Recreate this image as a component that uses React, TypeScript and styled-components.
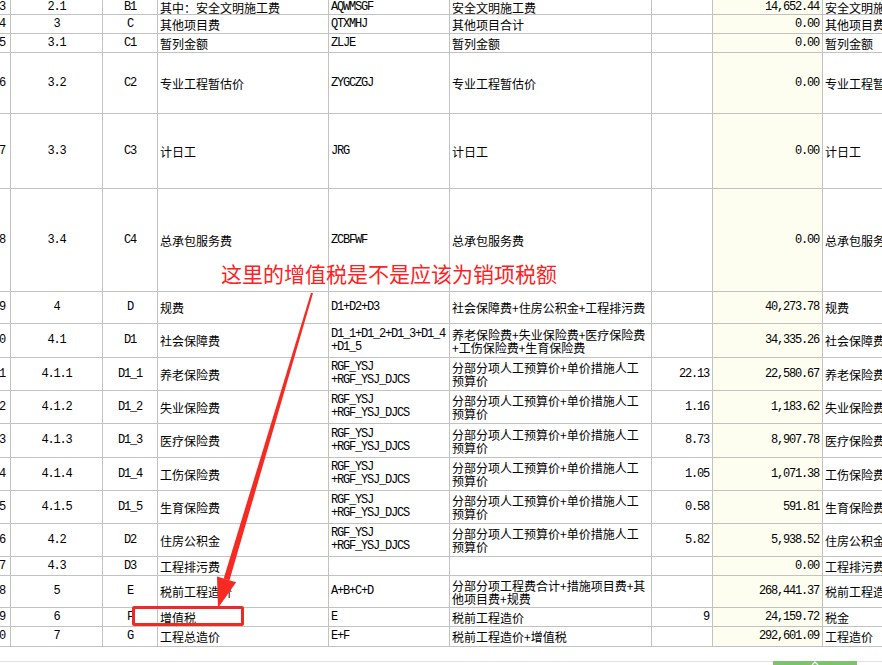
import React from "react";
import styled, { createGlobalStyle } from "styled-components";

const GlobalStyle = createGlobalStyle`
  html, body { margin: 0; padding: 0; background: #ffffff; overflow: hidden; }
  * { box-sizing: border-box; }
`;

const GRID = "#c2c2c2";
const MONO = `"Liberation Mono", "Noto Sans CJK SC", monospace`;
const CJK = `"Noto Sans CJK SC", "Liberation Sans", sans-serif`;

const Page = styled.div`
  position: relative;
  width: 882px;
  height: 665px;
  overflow: hidden;
  background: #ffffff;
`;

const Sheet = styled.div`
  display: flex;
  flex-direction: column;
  margin-left: -26px;
`;

const Row = styled.div<{ $h: number }>`
  display: grid;
  grid-template-columns: 37px 92px 55px 171px 121px 202px 61px 110px 120px;
  height: ${(p) => p.$h}px;
`;

type Align = "left" | "center" | "right";

const Cell = styled.div<{ $align: Align; $mono?: boolean; $fill?: boolean }>`
  display: flex;
  align-items: center;
  justify-content: ${(p) =>
    p.$align === "left" ? "flex-start" : p.$align === "right" ? "flex-end" : "center"};
  text-align: ${(p) => p.$align};
  border-right: 1px solid ${GRID};
  border-bottom: 1px solid ${GRID};
  background: ${(p) => (p.$fill ? "#fefef0" : "#ffffff")};
  padding: 0 ${(p) => (p.$align === "right" ? "3px" : "0")} 0
    ${(p) => (p.$align === "left" ? "2px" : "0")};
  font-family: ${(p) => (p.$mono ? MONO : CJK)};
  font-size: 12px;
  letter-spacing: ${(p) => (p.$mono ? "-1.2px" : "0")};
  line-height: 13px;
  color: #000000;
  white-space: pre-line;
  overflow: hidden;
`;

const NumCell = styled(Cell)`
  padding-right: 5px;
`;

const Spacer = styled.div`
  height: 14px;
`;

const BottomBar = styled.div`
  display: flex;
  height: 4px;
  padding-left: 773px;
  box-shadow: inset 0 1px 0 #e2e2e2;
`;

const Tab = styled.div`
  width: 84px;
  height: 4px;
  background: #7dc36b;
  display: flex;
  justify-content: center;
  align-items: flex-start;
`;

const Note = styled.div`
  position: absolute;
  left: 221px;
  top: 260px;
  font-family: ${CJK};
  font-size: 21px;
  line-height: 26px;
  color: #ff2121;
  white-space: nowrap;
`;

const Overlay = styled.svg`
  position: absolute;
  left: 0;
  top: 0;
  pointer-events: none;
`;

const Highlight = styled.div`
  position: absolute;
  left: 132px;
  top: 606px;
  width: 112px;
  height: 20px;
  border: 3px solid #ee2a24;
  border-radius: 2px;
`;

type RowData = {
  h: number;
  n: string;
  no: string;
  code: string;
  name: string;
  formula: string;
  desc: string;
  rate: string;
  amount: string;
  remark: string;
};

const FORM = "RGF_YSJ\n+RGF_YSJ_DJCS";
const DESC = "分部分项人工预算价+单价措施人工\n预算价";

const rows: RowData[] = [
  { h: 15, n: "13", no: "2.1", code: "B1", name: "其中：安全文明施工费", formula: "AQWMSGF", desc: "安全文明施工费", rate: "", amount: "14,652.44", remark: "安全文明施工费" },
  { h: 19, n: "14", no: "3", code: "C", name: "其他项目费", formula: "QTXMHJ", desc: "其他项目合计", rate: "", amount: "0.00", remark: "其他项目费" },
  { h: 19, n: "15", no: "3.1", code: "C1", name: "暂列金额", formula: "ZLJE", desc: "暂列金额", rate: "", amount: "0.00", remark: "暂列金额" },
  { h: 61, n: "16", no: "3.2", code: "C2", name: "专业工程暂估价", formula: "ZYGCZGJ", desc: "专业工程暂估价", rate: "", amount: "0.00", remark: "专业工程暂估价" },
  { h: 75, n: "17", no: "3.3", code: "C3", name: "计日工", formula: "JRG", desc: "计日工", rate: "", amount: "0.00", remark: "计日工" },
  { h: 103, n: "18", no: "3.4", code: "C4", name: "总承包服务费", formula: "ZCBFWF", desc: "总承包服务费", rate: "", amount: "0.00", remark: "总承包服务费" },
  { h: 32, n: "19", no: "4", code: "D", name: "规费", formula: "D1+D2+D3", desc: "社会保障费+住房公积金+工程排污费", rate: "", amount: "40,273.78", remark: "规费" },
  { h: 34, n: "20", no: "4.1", code: "D1", name: "社会保障费", formula: "D1_1+D1_2+D1_3+D1_4\n+D1_5", desc: "养老保险费+失业保险费+医疗保险费\n+工伤保险费+生育保险费", rate: "", amount: "34,335.26", remark: "社会保障费" },
  { h: 33, n: "21", no: "4.1.1", code: "D1_1", name: "养老保险费", formula: FORM, desc: DESC, rate: "22.13", amount: "22,580.67", remark: "养老保险费" },
  { h: 33, n: "22", no: "4.1.2", code: "D1_2", name: "失业保险费", formula: FORM, desc: DESC, rate: "1.16", amount: "1,183.62", remark: "失业保险费" },
  { h: 34, n: "23", no: "4.1.3", code: "D1_3", name: "医疗保险费", formula: FORM, desc: DESC, rate: "8.73", amount: "8,907.78", remark: "医疗保险费" },
  { h: 33, n: "24", no: "4.1.4", code: "D1_4", name: "工伤保险费", formula: FORM, desc: DESC, rate: "1.05", amount: "1,071.38", remark: "工伤保险费" },
  { h: 33, n: "25", no: "4.1.5", code: "D1_5", name: "生育保险费", formula: FORM, desc: DESC, rate: "0.58", amount: "591.81", remark: "生育保险费" },
  { h: 33, n: "26", no: "4.2", code: "D2", name: "住房公积金", formula: FORM, desc: DESC, rate: "5.82", amount: "5,938.52", remark: "住房公积金" },
  { h: 19, n: "27", no: "4.3", code: "D3", name: "工程排污费", formula: "", desc: "", rate: "", amount: "0.00", remark: "工程排污费" },
  { h: 32, n: "28", no: "5", code: "E", name: "税前工程造价", formula: "A+B+C+D", desc: "分部分项工程费合计+措施项目费+其\n他项目费+规费", rate: "", amount: "268,441.37", remark: "税前工程造价" },
  { h: 19, n: "29", no: "6", code: "F", name: "增值税", formula: "E", desc: "税前工程造价", rate: "9", amount: "24,159.72", remark: "税金" },
  { h: 20, n: "30", no: "7", code: "G", name: "工程总造价", formula: "E+F", desc: "税前工程造价+增值税", rate: "", amount: "292,601.09", remark: "工程造价" },
];

export default function App() {
  return (
    <>
      <GlobalStyle />
      <Page>
        <Sheet>
          {rows.map((r) => (
            <Row key={r.n} $h={r.h}>
              <NumCell $align="right" $mono>{r.n}</NumCell>
              <Cell $align="center" $mono>{r.no}</Cell>
              <Cell $align="center" $mono>{r.code}</Cell>
              <Cell $align="left">{r.name}</Cell>
              <Cell $align="left" $mono>{r.formula}</Cell>
              <Cell $align="left">{r.desc}</Cell>
              <Cell $align="right" $mono>{r.rate}</Cell>
              <Cell $align="right" $mono $fill>{r.amount}</Cell>
              <Cell $align="left">{r.remark}</Cell>
            </Row>
          ))}
        </Sheet>
        <Spacer />
        <BottomBar>
          <Tab>
            <svg width="10" height="4" viewBox="0 0 10 4">
              <path d="M2 4 L5 1 L8 4" stroke="#ffffff" strokeWidth="1.2" fill="none" />
            </svg>
          </Tab>
        </BottomBar>
        <Note>这里的增值税是不是应该为销项税额</Note>
        <Overlay width="882" height="665" viewBox="0 0 882 665">
          <polygon points="313,293.3 311,292.7 223.7,578.4 229.5,580.2" fill="#f52a22" />
          <polygon points="236.2,582.2 217,576.4 218,608" fill="#f52a22" />
        </Overlay>
        <Highlight />
      </Page>
    </>
  );
}
